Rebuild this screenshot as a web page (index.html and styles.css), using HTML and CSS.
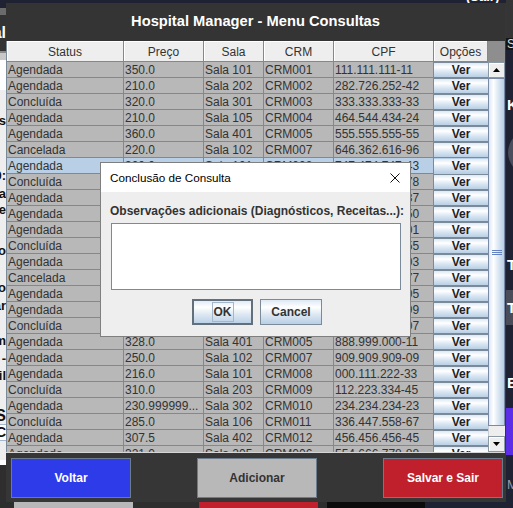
FILE: index.html
```html
<!DOCTYPE html>
<html lang="pt">
<head>
<meta charset="utf-8">
<title>Hospital Manager - Menu Consultas</title>
<link rel="stylesheet" href="styles.css">
</head>
<body>
<div class="desk-left">
  <div class="dl-navy"></div>
  <div class="dl-gray"></div>
  <div class="dl-head"><span>al</span></div>
  <div class="dl-line"></div>
  <div class="dl-white"></div>
  <div class="dl-form">
    <div class="sp13"></div><div class="fr"><span>s</span></div>
    <div class="sp41"></div><div class="fr"><span>0:</span></div>
    <div class="sp4"></div><div class="fr"><span>a</span></div>
    <div class="sp2"></div><div class="fr"><span>e</span></div>
    <div class="sp27"></div><div class="fr"><span>o</span></div>
    <div class="sp23"></div><div class="fr"><span>o</span></div>
    <div class="sp4"></div><div class="fr"><span>ar</span></div>
    <div class="sp21"></div><div class="fr"><span>m</span></div>
    <div class="sp4"></div><div class="fr"><span>-</span></div>
    <div class="sp3"></div><div class="fr"><span>il</span></div>
    <div class="sp25"></div><div class="fr big"><span>S</span></div>
  </div>
  <div class="dl-field"><span>C</span></div>
  <div class="dl-form2"></div>
  <div class="dl-white"></div>
  <div class="dl-dark"></div>
</div>

<div class="desk-right">
  <div class="dr-dark"></div>
  <div class="dr-black"><span>S</span></div>
  <div></div>
  <div class="dr-txt">K</div>
  <div></div>
  <div class="dr-circle-wrap"><div class="dr-circle"></div></div>
  <div></div>
  <div class="dr-txt">T</div>
  <div></div>
  <div class="dr-block"><span>T</span></div>
  <div></div>
  <div class="dr-txt">E</div>
  <div></div>
  <div class="dr-purple"></div>
  <div></div>
  <div class="dr-small">Ma</div>
  <div></div>
</div>

<div class="desk-bottom">
  <div class="db-dark1"></div>
  <div class="db-gray"></div>
  <div class="db-dark2"></div>
  <div class="db-red"></div>
  <div class="db-dark3"></div>
  <div class="db-black"></div>
</div>

<div class="desk-top-text">(Sair)</div>

<div class="win">
  <div class="win-title">Hospital Manager - Menu Consultas</div>
  <div class="table">
    <div class="thead">
      <div class="h">Status</div>
      <div class="h">Preço</div>
      <div class="h">Sala</div>
      <div class="h">CRM</div>
      <div class="h">CPF</div>
      <div class="h">Opções</div>
    </div>
    <div class="corner"></div>
    <div class="tbody">
      <div class="row"><div class="c">Agendada</div><div class="c">350.0</div><div class="c">Sala 101</div><div class="c">CRM001</div><div class="c">111.111.111-11</div><div class="c v"><span class="ver">Ver</span></div></div>
      <div class="row"><div class="c">Agendada</div><div class="c">210.0</div><div class="c">Sala 202</div><div class="c">CRM002</div><div class="c">282.726.252-42</div><div class="c v"><span class="ver">Ver</span></div></div>
      <div class="row"><div class="c">Concluída</div><div class="c">320.0</div><div class="c">Sala 301</div><div class="c">CRM003</div><div class="c">333.333.333-33</div><div class="c v"><span class="ver">Ver</span></div></div>
      <div class="row"><div class="c">Agendada</div><div class="c">210.0</div><div class="c">Sala 105</div><div class="c">CRM004</div><div class="c">464.544.434-24</div><div class="c v"><span class="ver">Ver</span></div></div>
      <div class="row"><div class="c">Agendada</div><div class="c">360.0</div><div class="c">Sala 401</div><div class="c">CRM005</div><div class="c">555.555.555-55</div><div class="c v"><span class="ver">Ver</span></div></div>
      <div class="row"><div class="c">Cancelada</div><div class="c">220.0</div><div class="c">Sala 102</div><div class="c">CRM007</div><div class="c">646.362.616-96</div><div class="c v"><span class="ver">Ver</span></div></div>
      <div class="row sel"><div class="c">Agendada</div><div class="c">300.0</div><div class="c">Sala 101</div><div class="c">CRM008</div><div class="c">747.474.747-43</div><div class="c v"><span class="ver">Ver</span></div></div>
      <div class="row"><div class="c">Concluída</div><div class="c"></div><div class="c"></div><div class="c"></div><div class="c">818.273.645-78</div><div class="c v"><span class="ver">Ver</span></div></div>
      <div class="row"><div class="c">Agendada</div><div class="c"></div><div class="c"></div><div class="c"></div><div class="c">929.384.756-87</div><div class="c v"><span class="ver">Ver</span></div></div>
      <div class="row"><div class="c">Agendada</div><div class="c"></div><div class="c"></div><div class="c"></div><div class="c">121.314.151-50</div><div class="c v"><span class="ver">Ver</span></div></div>
      <div class="row"><div class="c">Agendada</div><div class="c"></div><div class="c"></div><div class="c"></div><div class="c">202.303.404-01</div><div class="c v"><span class="ver">Ver</span></div></div>
      <div class="row"><div class="c">Concluída</div><div class="c"></div><div class="c"></div><div class="c"></div><div class="c">345.678.912-55</div><div class="c v"><span class="ver">Ver</span></div></div>
      <div class="row"><div class="c">Agendada</div><div class="c"></div><div class="c"></div><div class="c"></div><div class="c">567.890.123-03</div><div class="c v"><span class="ver">Ver</span></div></div>
      <div class="row"><div class="c">Cancelada</div><div class="c"></div><div class="c"></div><div class="c"></div><div class="c">789.012.345-77</div><div class="c v"><span class="ver">Ver</span></div></div>
      <div class="row"><div class="c">Agendada</div><div class="c"></div><div class="c"></div><div class="c"></div><div class="c">901.234.567-05</div><div class="c v"><span class="ver">Ver</span></div></div>
      <div class="row"><div class="c">Agendada</div><div class="c"></div><div class="c"></div><div class="c"></div><div class="c">135.792.468-99</div><div class="c v"><span class="ver">Ver</span></div></div>
      <div class="row"><div class="c">Concluída</div><div class="c"></div><div class="c"></div><div class="c"></div><div class="c">246.813.579-07</div><div class="c v"><span class="ver">Ver</span></div></div>
      <div class="row"><div class="c">Agendada</div><div class="c">328.0</div><div class="c">Sala 401</div><div class="c">CRM005</div><div class="c">888.999.000-11</div><div class="c v"><span class="ver">Ver</span></div></div>
      <div class="row"><div class="c">Agendada</div><div class="c">250.0</div><div class="c">Sala 102</div><div class="c">CRM007</div><div class="c">909.909.909-09</div><div class="c v"><span class="ver">Ver</span></div></div>
      <div class="row"><div class="c">Agendada</div><div class="c">216.0</div><div class="c">Sala 101</div><div class="c">CRM008</div><div class="c">000.111.222-33</div><div class="c v"><span class="ver">Ver</span></div></div>
      <div class="row"><div class="c">Concluída</div><div class="c">310.0</div><div class="c">Sala 203</div><div class="c">CRM009</div><div class="c">112.223.334-45</div><div class="c v"><span class="ver">Ver</span></div></div>
      <div class="row"><div class="c">Agendada</div><div class="c">230.999999...</div><div class="c">Sala 302</div><div class="c">CRM010</div><div class="c">234.234.234-23</div><div class="c v"><span class="ver">Ver</span></div></div>
      <div class="row"><div class="c">Concluída</div><div class="c">285.0</div><div class="c">Sala 106</div><div class="c">CRM011</div><div class="c">336.447.558-67</div><div class="c v"><span class="ver">Ver</span></div></div>
      <div class="row"><div class="c">Agendada</div><div class="c">307.5</div><div class="c">Sala 402</div><div class="c">CRM012</div><div class="c">456.456.456-45</div><div class="c v"><span class="ver">Ver</span></div></div>
      <div class="row"><div class="c">Agendada</div><div class="c">321.0</div><div class="c">Sala 205</div><div class="c">CRM006</div><div class="c">554.666.778-88</div><div class="c v"><span class="ver">Ver</span></div></div>
    </div>
    <div class="vscroll">
      <div class="sb-btn">
        <svg width="7" height="4" viewBox="0 0 7 4"><polygon points="0,4 7,4 3.5,0" fill="#000"/></svg>
      </div>
      <div class="sb-thumb">
        <svg width="10" height="5" viewBox="0 0 10 5"><rect x="0" y="0" width="10" height="1" fill="#6382bf"/><rect x="0" y="2" width="10" height="1" fill="#6382bf"/><rect x="0" y="4" width="10" height="1" fill="#6382bf"/></svg>
      </div>
      <div class="sb-track"></div>
      <div class="sb-btn">
        <svg width="7" height="4" viewBox="0 0 7 4"><polygon points="0,0 7,0 3.5,4" fill="#000"/></svg>
      </div>
    </div>
  </div>
  <div class="bar">
    <button class="btn btn-blue">Voltar</button>
    <button class="btn btn-gray">Adicionar</button>
    <button class="btn btn-red">Salvar e Sair</button>
  </div>
</div>

<div class="dialog">
  <div class="dlg-title">
    <span>Conclusão de Consulta</span>
    <svg class="dlg-x" width="10" height="10" viewBox="0 0 10 10"><path d="M0.5 0.5 L9.5 9.5 M9.5 0.5 L0.5 9.5" stroke="#111" stroke-width="1" fill="none"/></svg>
  </div>
  <div class="dlg-body">
    <div class="dlg-label">Observações adicionais (Diagnósticos, Receitas...):</div>
    <textarea class="dlg-text"></textarea>
    <div class="dlg-btns">
      <button class="dbtn dbtn-default"><span class="focus">OK</span></button>
      <button class="dbtn">Cancel</button>
    </div>
  </div>
</div>
</body>
</html>
```

FILE: styles.css
```css
* { box-sizing: border-box; }

html, body {
  margin: 0;
  padding: 0;
}

body {
  width: 513px;
  height: 508px;
  overflow: hidden;
  position: relative;
  background: #1e2233;
  font-family: "Liberation Sans", Arial, sans-serif;
  font-size: 12px;
  color: #333;
}

/* ---------- background desktop fragments ---------- */
.desk-left {
  position: absolute;
  left: 0;
  top: 0;
  width: 6px;
  height: 508px;
  display: grid;
  grid-template-rows: 8px 7px 36px 9px 30px 334px 17px 19px 5px 43px;
  overflow: hidden;
}
.desk-left > div { overflow: hidden; display: flex; justify-content: flex-end; white-space: nowrap; }
.dl-navy { background: #1e2233; }
.dl-gray { background: #6b6b6b; }
.dl-head { background: #333; color: #fff; font-weight: bold; font-size: 16px; align-items: center; }
.dl-line { background: #c8c8c8; border-top: 2px solid #8a8a8a; }
.dl-white { background: #fff; }
.dl-form { background: #eeeeee; flex-direction: column; align-items: flex-end; }
.dl-form .fr { height: 14px; line-height: 14px; font-weight: bold; color: #111; font-size: 13px; display: flex; justify-content: flex-end; width: 6px; overflow: hidden; }
.dl-form .fr.big { height: 16px; line-height: 16px; font-size: 16px; }
.dl-form .fr span { flex: none; }
.sp2 { height: 2px; } .sp3 { height: 3px; } .sp4 { height: 4px; }
.sp13 { height: 13px; } .sp21 { height: 21px; } .sp23 { height: 23px; }
.sp25 { height: 25px; } .sp27 { height: 27px; } .sp41 { height: 41px; }
.dl-field { background: #fff; border-top: 1px solid #a3b8cc; border-bottom: 1px solid #a3b8cc; font-weight: bold; font-size: 14px; line-height: 15px; color: #111; }
.dl-field span { flex: none; }
.dl-form2 { background: #eeeeee; }
.dl-dark { background: #2e2e2e; }

.desk-right {
  position: absolute;
  left: 506px;
  top: 0;
  width: 7px;
  height: 508px;
  display: grid;
  grid-template-rows: 38px 12px 48px 14px 18px 45px 83px 14px 18px 35px 51px 14px 18px 47px 23px 14px 16px;
  overflow: hidden;
}
.desk-right > div { overflow: hidden; white-space: nowrap; }
.dr-dark { background: #353535; }
.dr-black { background: #151515; color: #ddd; font-size: 12px; line-height: 12px; padding-left: 1px; }
.dr-txt { color: #fff; font-weight: bold; font-size: 15px; line-height: 14px; padding-left: 1px; }
.dr-circle-wrap { padding-left: 2px; }
.dr-circle { width: 45px; height: 45px; border-radius: 50%; background: #4a4d5b; }
.dr-block { background: #4a4c59; color: #fff; font-weight: bold; font-size: 15px; line-height: 35px; padding-left: 1px; }
.dr-purple { background: #5b2de6; }
.dr-small { color: #9a9aa6; font-size: 13px; line-height: 14px; padding-left: 1px; }

.desk-bottom {
  position: absolute;
  left: 0;
  top: 502px;
  width: 513px;
  height: 6px;
  display: flex;
}
.db-dark1 { width: 14px; background: #2e2e2e; }
.db-gray { width: 119px; background: #b8b8b8; }
.db-dark2 { width: 66px; background: #2e2e2e; }
.db-red { width: 119px; background: #c0202c; }
.db-dark3 { width: 9px; background: #2e2e2e; }
.db-black { width: 98px; background: #0c0c0c; }

.desk-top-text {
  position: absolute;
  left: 466px;
  top: -10px;
  color: #fff;
  font-weight: bold;
  font-size: 13px;
  line-height: 14px;
}

/* ---------- main window ---------- */
.win {
  position: absolute;
  left: 6px;
  top: 3px;
  width: 500px;
  height: 499px;
  background: #363636;
  padding-right: 1px;
  display: flex;
  flex-direction: column;
}

.win-title {
  height: 38px;
  flex: none;
  display: flex;
  align-items: center;
  justify-content: center;
  padding-bottom: 2px;
  color: #fff;
  font-weight: bold;
  font-size: 14.7px;
  background: #343434;
}

.table {
  height: 411px;
  flex: none;
  display: grid;
  grid-template-columns: 481px 17px;
  grid-template-rows: 21px 390px;
  border-left: 1px solid #7a8a99;
}

.thead,
.row {
  display: grid;
  grid-template-columns: 117px 80px 60px 70px 100px 54px;
}

.h {
  background: #eeeeee;
  border-right: 1px solid #7a8a99;
  border-bottom: 1px solid #7a8a99;
  box-shadow: inset 1px 1px 0 #ffffff;
  text-align: center;
  padding-top: 2px;
  line-height: 18px;
  color: #333;
  white-space: nowrap;
}

.corner { background: #8e8e8e; }

.tbody { overflow: hidden; background: #b8b8b8; }

.row { height: 16px; }

.c {
  background: #b8b8b8;
  border-right: 1px solid #7a8a99;
  border-bottom: 1px solid #7a8a99;
  padding-left: 1px;
  line-height: 16px;
  white-space: nowrap;
  overflow: hidden;
  color: #333;
}

.row.sel .c { background: #b8cfe5; }

.c.v {
  background: #7a8a99;
  border-right: 0;
  border-bottom: 0;
  padding: 1px 0 1px 0;
}

.ver {
  display: block;
  height: 14px;
  line-height: 14px;
  text-align: center;
  font-weight: bold;
  color: #222;
  background: linear-gradient(#dde8f3 0%, #ffffff 30%, #dde8f3 60%, #b8cfe5 100%);
}

.vscroll {
  display: flex;
  flex-direction: column;
  background: #eeeeee;
}
.sb-btn {
  height: 16px;
  flex: none;
  display: flex;
  align-items: center;
  justify-content: center;
  background: #eeeeee;
  border: 1px solid #8a99a6;
  box-shadow: inset 1px 1px 0 #fff;
}
.sb-thumb {
  height: 348px;
  flex: none;
  display: flex;
  align-items: center;
  justify-content: center;
  border: 1px solid #7a8aa6;
  background: linear-gradient(to right, #dde8f3 0%, #ffffff 30%, #dde8f3 60%, #b8cfe5 100%);
}
.sb-track {
  flex: 1;
  background: #eeeeee;
  border-left: 1px solid #c8ced4;
}

.bar {
  height: 50px;
  flex: none;
  border-top: 1px solid #d6d6d6;
  display: flex;
  align-items: flex-start;
  gap: 66px;
  padding: 5px 0 0 5px;
  background: #363636;
}

.btn {
  width: 120px;
  height: 40px;
  border: 1px solid #6c7c8d;
  font-family: "Liberation Sans", Arial, sans-serif;
  font-weight: bold;
  font-size: 12px;
  padding: 0;
  margin: 0;
}
.btn-blue { background: #2e3be8; color: #fff; }
.btn-gray { background: #b8b8b8; color: #333; }
.btn-red { background: #c0202c; color: #fff; }

/* ---------- dialog ---------- */
.dialog {
  position: absolute;
  left: 100px;
  top: 162px;
  width: 311px;
  height: 175px;
  border: 1px solid #7f7f7f;
  display: flex;
  flex-direction: column;
  background: #eeeeee;
}

.dlg-title {
  height: 29px;
  flex: none;
  background: #ffffff;
  display: flex;
  align-items: center;
  justify-content: space-between;
  padding: 0 10px 0 9px;
  font-size: 11.7px;
  color: #000;
}
.dlg-x { display: block; }

.dlg-body {
  flex: 1;
  display: flex;
  flex-direction: column;
  padding: 12px 10px 0 10px;
}

.dlg-label {
  margin-left: -1px;
  font-weight: bold;
  line-height: 14px;
  color: #333;
  white-space: nowrap;
}

.dlg-text {
  margin: 5px 0 0 0;
  width: 290px;
  height: 67px;
  border: 1px solid #7a8a99;
  background: #fff;
  resize: none;
  padding: 0;
  outline: none;
  display: block;
}

.dlg-btns {
  margin-top: 9px;
  display: flex;
  justify-content: center;
  gap: 7px;
  padding-left: 3px;
}

.dbtn {
  width: 62px;
  height: 26px;
  margin: 0;
  padding: 0;
  border: 1px solid #7a8a99;
  background: linear-gradient(#dde8f3 0%, #ffffff 30%, #dde8f3 60%, #b8cfe5 100%);
  font-family: "Liberation Sans", Arial, sans-serif;
  font-weight: bold;
  font-size: 12px;
  color: #333;
  display: flex;
  align-items: center;
  justify-content: center;
}
.dbtn-default {
  width: 61px;
  border: 1px solid #63707c;
  box-shadow: inset 0 0 0 1px #63707c;
}
.focus {
  display: block;
  height: 20px;
  line-height: 18px;
  padding: 0 1px;
  border: 1px solid #a3b8cc;
}
```
